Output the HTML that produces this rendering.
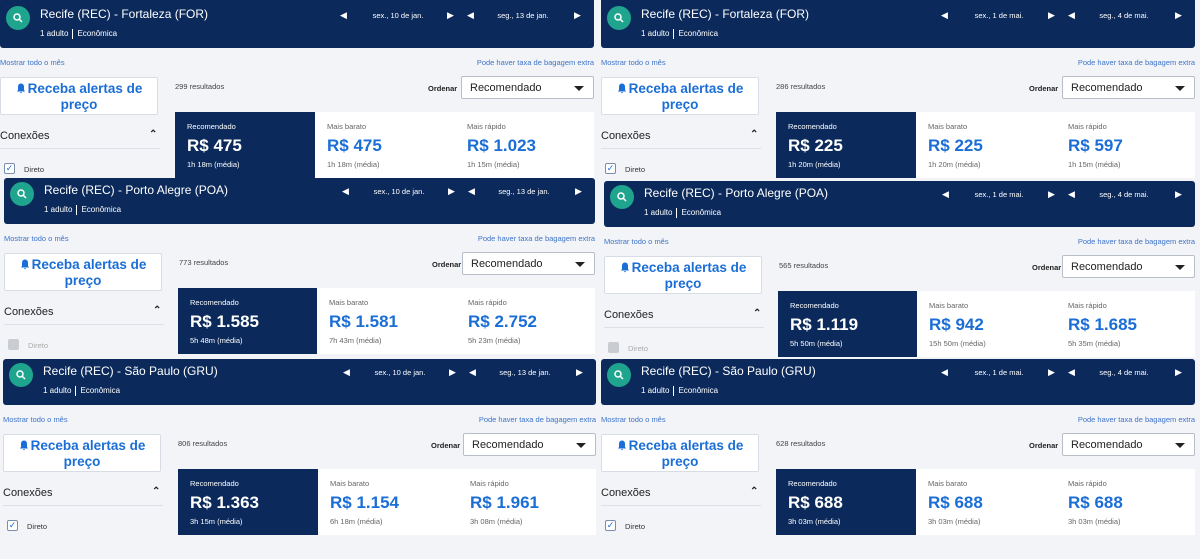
<!DOCTYPE html>
<html><head><meta charset="utf-8"><style>
*{margin:0;padding:0;box-sizing:border-box}
body{width:1200px;height:538px;overflow:hidden;background:#f2f4f7;font-family:"Liberation Sans",sans-serif;position:relative}
.p{position:absolute;width:594px;height:200px;background:#f2f4f7}
.h{position:absolute;left:0;top:0;width:100%;height:46px;background:#0b2a5b;border-radius:3px;color:#fff}
.sc{position:absolute;left:6px;top:4px;width:24px;height:24px;border-radius:50%;background:#1fa58e}
.t{position:absolute;left:40px;top:5px;font-size:12px}
.s{position:absolute;left:40px;top:27px;font-size:8px}
.s i{display:inline-block;width:1px;height:10px;background:#fff;vertical-align:middle;margin:0 4px}
.ar{position:absolute;top:8px;font-size:9px}
.dt{position:absolute;top:9px;font-size:7.5px;width:90px;text-align:center}
.lk{position:absolute;top:56px;font-size:7.5px;color:#3f74c9}
.al{position:absolute;left:0;top:75px;width:158px;height:38px;background:#fff;border:1px solid #d8dde5;border-radius:2px;color:#1b6ed6;font-weight:bold;font-size:13.5px;text-align:center;line-height:16px;padding-top:3px}
.al svg{vertical-align:-1px;margin-right:2px}
.rs{position:absolute;left:175px;top:80px;font-size:7.5px;color:#444}
.or{position:absolute;left:428px;top:82px;font-size:7.5px;font-weight:bold;color:#222}
.sel{position:absolute;left:461px;top:74px;width:133px;height:23px;background:#fff;border:1px solid #b8bec8;border-radius:2px;font-size:11px;color:#222;padding:5px 0 0 8px}
.sel b{position:absolute;right:9px;top:9px;border-left:5px solid transparent;border-right:5px solid transparent;border-top:5px solid #222}
.cd{position:absolute;top:110px;height:66px;width:140px;background:#fff;padding:10px 0 0 12px;color:#666}
.cd.n{background:#0b2a5b;color:#fff}
.cd .l{font-size:7.5px}
.cd .pr{font-size:17px;font-weight:bold;color:#1b6ed6;margin-top:5px}
.cd.n .pr{color:#fff}
.cd .m{font-size:7.5px;margin-top:4px}
.cx{position:absolute;left:0;top:128px;font-size:11px;color:#222}
.up{position:absolute;left:149px;top:127px;font-size:10px;color:#222;font-weight:bold}
.hr{position:absolute;left:0;top:146px;width:160px;height:1px;background:#dde1e7}
.cb{position:absolute;left:4px;top:161px;width:11px;height:11px;border:1px solid #7a8ea9;border-radius:2px;background:#fff;color:#1b6ed6;font-size:9px;line-height:9px;text-align:center}
.cb.g{background:#c9ccd1;border-color:#c9ccd1}
.dr{position:absolute;left:24px;top:163px;font-size:7.5px;color:#333}
.dr.g{color:#aaa}
</style></head><body>

<div class="p" style="left:0;top:2px"><div class="h" style="top:-4px;height:50px"><div class="sc" style="top:8px"><svg width="24" height="24"><circle cx="11" cy="11" r="3" fill="none" stroke="#fff" stroke-width="1.5"/><line x1="13" y1="13" x2="16" y2="16" stroke="#fff" stroke-width="1.5"/></svg></div><div class="t" style="top:9px">Recife (REC) - Fortaleza (FOR)</div><div class="s" style="top:31px">1 adulto<i></i>Econômica</div><div class="ar" style="left:340px;top:12px">◀</div><div class="dt" style="left:353px;top:13px">sex., 10 de jan.</div><div class="ar" style="left:447px;top:12px">▶</div><div class="ar" style="left:467px;top:12px">◀</div><div class="dt" style="left:478px;top:13px">seg., 13 de jan.</div><div class="ar" style="left:574px;top:12px">▶</div></div>
<div class="lk" style="left:0">Mostrar todo o mês</div><div class="lk" style="right:0">Pode haver taxa de bagagem extra</div>
<div class="al"><svg width="10" height="11" viewBox="0 0 10 11"><path d="M5 0.5C3 0.5 2 2 2 4V7L1 8.5H9L8 7V4C8 2 7 0.5 5 0.5Z M4 9.3H6A1 1 0 0 1 4 9.3Z" fill="#1b6ed6"/></svg>Receba alertas de<br>preço</div><div class="rs">299 resultados</div><div class="or">Ordenar</div><div class="sel">Recomendado<b></b></div>
<div class="cx">Conexões</div><div class="up">⌃</div><div class="hr"></div><div class="cb">✓</div><div class="dr">Direto</div>
<div class="cd n" style="left:175px"><div class="l">Recomendado</div><div class="pr">R$ 475</div><div class="m">1h 18m (média)</div></div>
<div class="cd" style="left:315px"><div class="l">Mais barato</div><div class="pr">R$ 475</div><div class="m">1h 18m (média)</div></div>
<div class="cd" style="left:455px;width:139px"><div class="l">Mais rápido</div><div class="pr">R$ 1.023</div><div class="m">1h 15m (média)</div></div>
</div>

<div class="p" style="left:601px;top:2px"><div class="h" style="top:-4px;height:50px"><div class="sc" style="top:8px"><svg width="24" height="24"><circle cx="11" cy="11" r="3" fill="none" stroke="#fff" stroke-width="1.5"/><line x1="13" y1="13" x2="16" y2="16" stroke="#fff" stroke-width="1.5"/></svg></div><div class="t" style="top:9px">Recife (REC) - Fortaleza (FOR)</div><div class="s" style="top:31px">1 adulto<i></i>Econômica</div><div class="ar" style="left:340px;top:12px">◀</div><div class="dt" style="left:353px;top:13px">sex., 1 de mai.</div><div class="ar" style="left:447px;top:12px">▶</div><div class="ar" style="left:467px;top:12px">◀</div><div class="dt" style="left:478px;top:13px">seg., 4 de mai.</div><div class="ar" style="left:574px;top:12px">▶</div></div>
<div class="lk" style="left:0">Mostrar todo o mês</div><div class="lk" style="right:0">Pode haver taxa de bagagem extra</div>
<div class="al"><svg width="10" height="11" viewBox="0 0 10 11"><path d="M5 0.5C3 0.5 2 2 2 4V7L1 8.5H9L8 7V4C8 2 7 0.5 5 0.5Z M4 9.3H6A1 1 0 0 1 4 9.3Z" fill="#1b6ed6"/></svg>Receba alertas de<br>preço</div><div class="rs">286 resultados</div><div class="or">Ordenar</div><div class="sel">Recomendado<b></b></div>
<div class="cx">Conexões</div><div class="up">⌃</div><div class="hr"></div><div class="cb">✓</div><div class="dr">Direto</div>
<div class="cd n" style="left:175px"><div class="l">Recomendado</div><div class="pr">R$ 225</div><div class="m">1h 20m (média)</div></div>
<div class="cd" style="left:315px"><div class="l">Mais barato</div><div class="pr">R$ 225</div><div class="m">1h 20m (média)</div></div>
<div class="cd" style="left:455px;width:139px"><div class="l">Mais rápido</div><div class="pr">R$ 597</div><div class="m">1h 15m (média)</div></div>
</div>

<div class="p" style="left:4px;top:178px;width:591px"><div class="h"><div class="sc"><svg width="24" height="24"><circle cx="11" cy="11" r="3" fill="none" stroke="#fff" stroke-width="1.5"/><line x1="13" y1="13" x2="16" y2="16" stroke="#fff" stroke-width="1.5"/></svg></div><div class="t">Recife (REC) - Porto Alegre (POA)</div><div class="s">1 adulto<i></i>Econômica</div><div class="ar" style="left:338px">◀</div><div class="dt" style="left:350px">sex., 10 de jan.</div><div class="ar" style="left:444px">▶</div><div class="ar" style="left:464px">◀</div><div class="dt" style="left:475px">seg., 13 de jan.</div><div class="ar" style="left:571px">▶</div></div>
<div class="lk" style="left:0">Mostrar todo o mês</div><div class="lk" style="right:0">Pode haver taxa de bagagem extra</div>
<div class="al"><svg width="10" height="11" viewBox="0 0 10 11"><path d="M5 0.5C3 0.5 2 2 2 4V7L1 8.5H9L8 7V4C8 2 7 0.5 5 0.5Z M4 9.3H6A1 1 0 0 1 4 9.3Z" fill="#1b6ed6"/></svg>Receba alertas de<br>preço</div><div class="rs">773 resultados</div><div class="or">Ordenar</div><div class="sel" style="left:458px">Recomendado<b></b></div>
<div class="cx">Conexões</div><div class="up">⌃</div><div class="hr"></div><div class="cb g"></div><div class="dr g">Direto</div>
<div class="cd n" style="left:174px;width:139px"><div class="l">Recomendado</div><div class="pr">R$ 1.585</div><div class="m">5h 48m (média)</div></div>
<div class="cd" style="left:313px;width:139px"><div class="l">Mais barato</div><div class="pr">R$ 1.581</div><div class="m">7h 43m (média)</div></div>
<div class="cd" style="left:452px;width:139px"><div class="l">Mais rápido</div><div class="pr">R$ 2.752</div><div class="m">5h 23m (média)</div></div>
</div>

<div class="p" style="left:604px;top:181px;width:591px"><div class="h"><div class="sc"><svg width="24" height="24"><circle cx="11" cy="11" r="3" fill="none" stroke="#fff" stroke-width="1.5"/><line x1="13" y1="13" x2="16" y2="16" stroke="#fff" stroke-width="1.5"/></svg></div><div class="t">Recife (REC) - Porto Alegre (POA)</div><div class="s">1 adulto<i></i>Econômica</div><div class="ar" style="left:338px">◀</div><div class="dt" style="left:350px">sex., 1 de mai.</div><div class="ar" style="left:444px">▶</div><div class="ar" style="left:464px">◀</div><div class="dt" style="left:475px">seg., 4 de mai.</div><div class="ar" style="left:571px">▶</div></div>
<div class="lk" style="left:0">Mostrar todo o mês</div><div class="lk" style="right:0">Pode haver taxa de bagagem extra</div>
<div class="al"><svg width="10" height="11" viewBox="0 0 10 11"><path d="M5 0.5C3 0.5 2 2 2 4V7L1 8.5H9L8 7V4C8 2 7 0.5 5 0.5Z M4 9.3H6A1 1 0 0 1 4 9.3Z" fill="#1b6ed6"/></svg>Receba alertas de<br>preço</div><div class="rs">565 resultados</div><div class="or">Ordenar</div><div class="sel" style="left:458px">Recomendado<b></b></div>
<div class="cx">Conexões</div><div class="up">⌃</div><div class="hr"></div><div class="cb g"></div><div class="dr g">Direto</div>
<div class="cd n" style="left:174px;width:139px"><div class="l">Recomendado</div><div class="pr">R$ 1.119</div><div class="m">5h 50m (média)</div></div>
<div class="cd" style="left:313px;width:139px"><div class="l">Mais barato</div><div class="pr">R$ 942</div><div class="m">15h 50m (média)</div></div>
<div class="cd" style="left:452px;width:139px"><div class="l">Mais rápido</div><div class="pr">R$ 1.685</div><div class="m">5h 35m (média)</div></div>
</div>

<div class="p" style="left:3px;top:359px;width:593px"><div class="h"><div class="sc"><svg width="24" height="24"><circle cx="11" cy="11" r="3" fill="none" stroke="#fff" stroke-width="1.5"/><line x1="13" y1="13" x2="16" y2="16" stroke="#fff" stroke-width="1.5"/></svg></div><div class="t">Recife (REC) - São Paulo (GRU)</div><div class="s">1 adulto<i></i>Econômica</div><div class="ar" style="left:340px">◀</div><div class="dt" style="left:352px">sex., 10 de jan.</div><div class="ar" style="left:446px">▶</div><div class="ar" style="left:466px">◀</div><div class="dt" style="left:477px">seg., 13 de jan.</div><div class="ar" style="left:573px">▶</div></div>
<div class="lk" style="left:0">Mostrar todo o mês</div><div class="lk" style="right:0">Pode haver taxa de bagagem extra</div>
<div class="al"><svg width="10" height="11" viewBox="0 0 10 11"><path d="M5 0.5C3 0.5 2 2 2 4V7L1 8.5H9L8 7V4C8 2 7 0.5 5 0.5Z M4 9.3H6A1 1 0 0 1 4 9.3Z" fill="#1b6ed6"/></svg>Receba alertas de<br>preço</div><div class="rs">806 resultados</div><div class="or">Ordenar</div><div class="sel" style="left:460px">Recomendado<b></b></div>
<div class="cx">Conexões</div><div class="up">⌃</div><div class="hr"></div><div class="cb">✓</div><div class="dr">Direto</div>
<div class="cd n" style="left:175px"><div class="l">Recomendado</div><div class="pr">R$ 1.363</div><div class="m">3h 15m (média)</div></div>
<div class="cd" style="left:315px"><div class="l">Mais barato</div><div class="pr">R$ 1.154</div><div class="m">6h 18m (média)</div></div>
<div class="cd" style="left:455px;width:138px"><div class="l">Mais rápido</div><div class="pr">R$ 1.961</div><div class="m">3h 08m (média)</div></div>
</div>

<div class="p" style="left:601px;top:359px"><div class="h"><div class="sc"><svg width="24" height="24"><circle cx="11" cy="11" r="3" fill="none" stroke="#fff" stroke-width="1.5"/><line x1="13" y1="13" x2="16" y2="16" stroke="#fff" stroke-width="1.5"/></svg></div><div class="t">Recife (REC) - São Paulo (GRU)</div><div class="s">1 adulto<i></i>Econômica</div><div class="ar" style="left:340px">◀</div><div class="dt" style="left:353px">sex., 1 de mai.</div><div class="ar" style="left:447px">▶</div><div class="ar" style="left:467px">◀</div><div class="dt" style="left:478px">seg., 4 de mai.</div><div class="ar" style="left:574px">▶</div></div>
<div class="lk" style="left:0">Mostrar todo o mês</div><div class="lk" style="right:0">Pode haver taxa de bagagem extra</div>
<div class="al"><svg width="10" height="11" viewBox="0 0 10 11"><path d="M5 0.5C3 0.5 2 2 2 4V7L1 8.5H9L8 7V4C8 2 7 0.5 5 0.5Z M4 9.3H6A1 1 0 0 1 4 9.3Z" fill="#1b6ed6"/></svg>Receba alertas de<br>preço</div><div class="rs">628 resultados</div><div class="or">Ordenar</div><div class="sel">Recomendado<b></b></div>
<div class="cx">Conexões</div><div class="up">⌃</div><div class="hr"></div><div class="cb">✓</div><div class="dr">Direto</div>
<div class="cd n" style="left:175px"><div class="l">Recomendado</div><div class="pr">R$ 688</div><div class="m">3h 03m (média)</div></div>
<div class="cd" style="left:315px"><div class="l">Mais barato</div><div class="pr">R$ 688</div><div class="m">3h 03m (média)</div></div>
<div class="cd" style="left:455px;width:139px"><div class="l">Mais rápido</div><div class="pr">R$ 688</div><div class="m">3h 03m (média)</div></div>
</div>

</body></html>
